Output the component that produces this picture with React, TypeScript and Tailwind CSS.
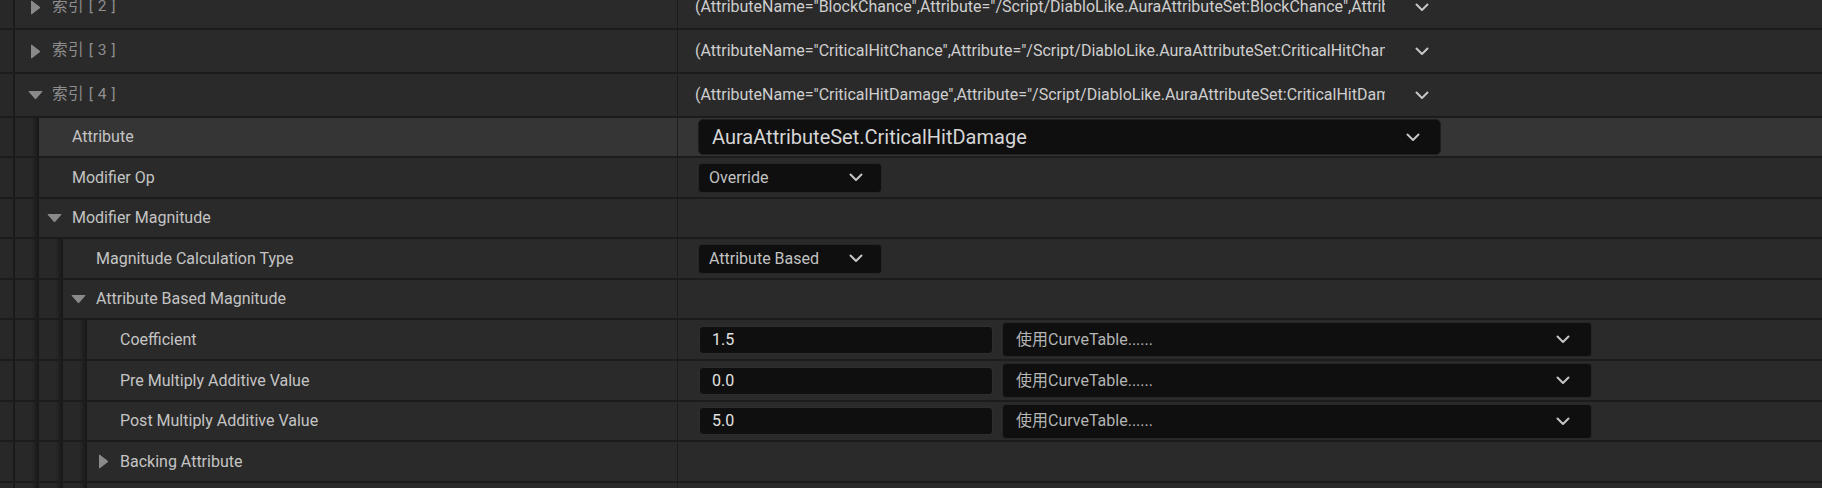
import React from 'react';

type Expander = 'open' | 'closed' | null;

function Chevron({ className = '' }: { className?: string }) {
  return (
    <svg width="14" height="9" viewBox="0 0 14 9" className={className}>
      <polyline points="1.5,1.5 7,7 12.5,1.5" fill="none" stroke="#c6c6c6" strokeWidth="2" strokeLinecap="round" strokeLinejoin="round" />
    </svg>
  );
}

function Arrow({ open }: { open: boolean }) {
  if (open) {
    return (
      <svg width="15" height="10" viewBox="0 0 15 10" className="shrink-0">
        <path d="M1 1.5 H14 L7.5 9 Z" fill="#8a8a8a" stroke="#8a8a8a" strokeWidth="1" strokeLinejoin="round" />
      </svg>
    );
  }
  return (
    <svg width="11" height="15" viewBox="0 0 11 15" className="shrink-0">
      <path d="M1.5 1 V14 L10 7.5 Z" fill="#8a8a8a" stroke="#8a8a8a" strokeWidth="1" strokeLinejoin="round" />
    </svg>
  );
}

function Row({
  level,
  h,
  expander = null,
  label,
  index = false,
  highlight = false,
  children,
}: {
  level: number;
  h: string;
  expander?: Expander;
  label?: string;
  index?: boolean;
  highlight?: boolean;
  children?: React.ReactNode;
}) {
  const bg = highlight ? 'bg-[#353535]' : 'bg-[#2a2a2a]';
  return (
    <div className={`flex ${h} border-b-2 border-[#1c1c1c] shrink-0`}>
      <div className="w-[677px] shrink-0 flex h-full">
        {/* gutter */}
        <div className="w-[15px] shrink-0 flex h-full">
          <div className="flex-1 bg-[#282828]" />
          <div className="w-[2px] bg-[#1a1a1a]" />
        </div>
        {Array.from({ length: level }).map((_, i) => (
          <div key={i} className="w-[24px] shrink-0 h-full bg-linear-to-r from-[#282828] from-70% to-[#171717]" />
        ))}
        <div className={`flex-1 flex items-center h-full ${bg}`}>
          {index ? (
            <>
              <div className="w-[37px] shrink-0 flex items-center justify-center pl-[4px]">
                {expander && <Arrow open={expander === 'open'} />}
              </div>
              <span className="text-[15.5px] text-[#8e8e8e] tracking-[0.6px]">{label}</span>
            </>
          ) : (
            <>
              <div className="w-[33px] shrink-0 flex items-center pl-[8px]">
                {expander === 'open' && <Arrow open />}
                {expander === 'closed' && <span className="pl-[3px] flex"><Arrow open={false} /></span>}
              </div>
              <span className="text-[16px] text-[#c4c4c4]">{label}</span>
            </>
          )}
        </div>
      </div>
      <div className="w-[1px] shrink-0 bg-[#1c1c1c]" />
      <div className={`flex-1 flex items-center h-full ${bg}`}>{children}</div>
    </div>
  );
}

function IndexValue({ text }: { text: string }) {
  return (
    <div className="flex items-center pl-[17px]">
      <div className="w-[690px] overflow-hidden whitespace-nowrap text-[16px] text-[#cfcfcf]">{text}</div>
      <Chevron className="ml-[30px]" />
    </div>
  );
}

function SmallCombo({ text }: { text: string }) {
  return (
    <div className="ml-[20px] w-[184px] h-[30px] rounded-[4px] bg-[#0f0f0f] border border-[#262626] flex items-center justify-between pl-[10px] pr-[18px]">
      <span className="text-[16px] text-[#c2c2c2]">{text}</span>
      <Chevron />
    </div>
  );
}

function NumberRow({ value }: { value: string }) {
  return (
    <div className="flex items-center ml-[21px]">
      <div className="w-[294px] h-[28px] rounded-[4px] bg-[#0f0f0f] border border-[#2e2e2e] flex items-center pl-[12px]">
        <span className="text-[16px] text-[#e2e2e2]">{value}</span>
      </div>
      <div className="ml-[9px] w-[590px] h-[35px] rounded-[4px] bg-[#0f0f0f] border border-[#262626] flex items-center justify-between pl-[13px] pr-[21px]">
        <span className="text-[16px] text-[#b4b4b4]">使用CurveTable......</span>
        <Chevron />
      </div>
    </div>
  );
}

export default function App() {
  return (
    <div className="w-[1822px] h-[488px] overflow-hidden bg-[#2a2a2a] font-['Roboto','Noto_Sans_CJK_SC',sans-serif]">
      <div className="flex flex-col -mt-[14px]">
        <Row level={0} h="h-[44px]" index expander="closed" label="索引 [ 2 ]">
          <IndexValue text={'(AttributeName="BlockChance",Attribute="/Script/DiabloLike.AuraAttributeSet:BlockChance",AttributeOwner="/Script/DiabloLike.AuraAttributeSet")'} />
        </Row>
        <Row level={0} h="h-[44px]" index expander="closed" label="索引 [ 3 ]">
          <IndexValue text={'(AttributeName="CriticalHitChance",Attribute="/Script/DiabloLike.AuraAttributeSet:CriticalHitChance",AttributeOwner="/Script/DiabloLike.AuraAttributeSet")'} />
        </Row>
        <Row level={0} h="h-[44px]" index expander="open" label="索引 [ 4 ]">
          <IndexValue text={'(AttributeName="CriticalHitDamage",Attribute="/Script/DiabloLike.AuraAttributeSet:CriticalHitDamage",AttributeOwner="/Script/DiabloLike.AuraAttributeSet")'} />
        </Row>
        <Row level={1} h="h-[40px]" label="Attribute" highlight>
          <div className="ml-[20px] w-[743px] h-[36px] rounded-[5px] bg-[#0f0f0f] border border-[#1f1f1f] flex items-center justify-between pl-[13px] pr-[20px]">
            <span className="text-[20px] text-[#d6d6d6]">AuraAttributeSet.CriticalHitDamage</span>
            <Chevron />
          </div>
        </Row>
        <Row level={1} h="h-[41px]" label="Modifier Op">
          <SmallCombo text="Override" />
        </Row>
        <Row level={1} h="h-[40px]" expander="open" label="Modifier Magnitude" />
        <Row level={2} h="h-[41px]" label="Magnitude Calculation Type">
          <SmallCombo text="Attribute Based" />
        </Row>
        <Row level={2} h="h-[40px]" expander="open" label="Attribute Based Magnitude" />
        <Row level={3} h="h-[41px]" label="Coefficient">
          <NumberRow value="1.5" />
        </Row>
        <Row level={3} h="h-[41px]" label="Pre Multiply Additive Value">
          <NumberRow value="0.0" />
        </Row>
        <Row level={3} h="h-[40px]" label="Post Multiply Additive Value">
          <NumberRow value="5.0" />
        </Row>
        <Row level={3} h="h-[41px]" expander="closed" label="Backing Attribute" />
        <Row level={3} h="h-[40px]" label="" />
      </div>
    </div>
  );
}
